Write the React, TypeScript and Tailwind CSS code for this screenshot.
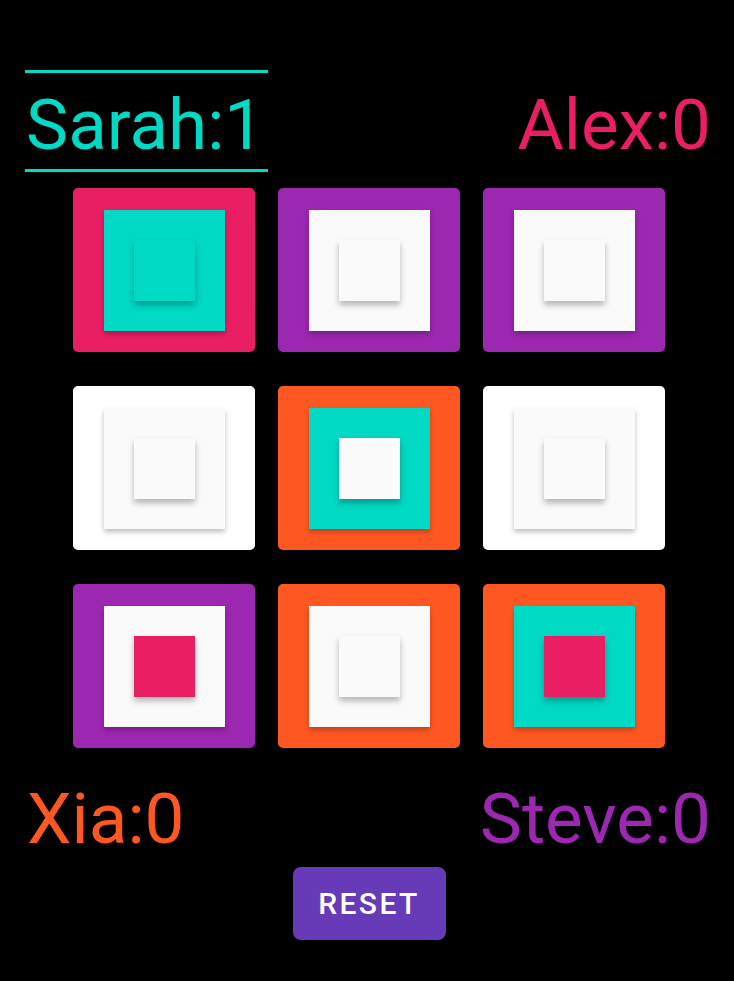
import React from "react";

const C: Record<string, string> = {
  pink: "bg-[#e91e63]",
  purple: "bg-[#9c27b0]",
  orange: "bg-[#ff5722]",
  teal: "bg-[#00d9c4]",
  white: "bg-[#ffffff]",
  light: "bg-[#fafafa]",
};

type Cell = [string, string, string];

const cells: Cell[] = [
  ["pink", "teal", "teal"],
  ["purple", "light", "light"],
  ["purple", "light", "light"],
  ["white", "light", "light"],
  ["orange", "teal", "light"],
  ["white", "light", "light"],
  ["purple", "light", "pink"],
  ["orange", "light", "light"],
  ["orange", "teal", "pink"],
];

function Box({ c }: { c: Cell }) {
  return (
    <div className={`${C[c[0]]} w-[182px] h-[164px] rounded-[5px] flex items-center justify-center`}>
      <div className={`${C[c[1]]} w-[121px] h-[121px] flex items-center justify-center shadow-[0_3px_5px_rgba(0,0,0,0.25)]`}>
        <div className={`${C[c[2]]} w-[61px] h-[61px] shadow-[0_4px_6px_rgba(0,0,0,0.28)]`} />
      </div>
    </div>
  );
}

export default function App() {
  return (
    <div
      className="w-[734px] h-[981px] bg-black overflow-hidden"
      style={{ fontFamily: "Roboto, 'Noto Sans', sans-serif" }}
    >
      <div className="flex justify-between items-start pt-[70px] pl-[25px] pr-[23px]">
        <div className="border-y-[3px] border-[#00d9c4] w-[243px] h-[102px] flex items-start pt-[16px]">
          <span className="text-[#00d9c4] text-[71px] leading-none pl-[1px]">Sarah:1</span>
        </div>
        <div className="h-[102px] flex items-start pt-[19px]">
          <span className="text-[#e91e63] text-[71px] leading-none">Alex:0</span>
        </div>
      </div>
      <div className="ml-[73px] mt-[16px] grid grid-cols-[182px_182px_182px] gap-x-[23px] gap-y-[34px]">
        {cells.map((c, i) => (
          <Box key={i} c={c} />
        ))}
      </div>
      <div className="flex justify-between pl-[27px] pr-[23px] mt-[35px]">
        <span className="text-[#ff5722] text-[71px] leading-none">Xia:0</span>
        <span className="text-[#9c27b0] text-[71px] leading-none">Steve:0</span>
      </div>
      <div className="flex justify-center mt-[13px]">
        <button className="w-[153px] h-[73px] ml-[4px] rounded-[8px] bg-[#673ab7] text-white text-[30px] font-medium tracking-[0.08em]">
          RESET
        </button>
      </div>
    </div>
  );
}
